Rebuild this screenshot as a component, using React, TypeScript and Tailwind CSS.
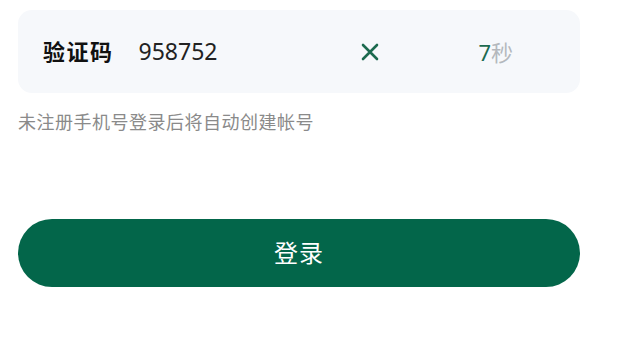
import React, { useState } from 'react';

export default function App() {
    const [code, setCode] = useState('958752');
    const seconds = 7;

    return (
        <div
            className="w-[618px] h-[343px] bg-white overflow-hidden"
            style={{ fontFamily: '"Noto Sans", "Noto Sans CJK SC", sans-serif' }}
        >
            <div className="ml-[18px] w-[562px] pt-[10px]">
                <div className="h-[83px] rounded-[14px] bg-[#f6f8fb] flex items-center pl-[25px] pr-[67px]">
                    <span className="text-[22px] font-bold text-[#111] tracking-[1.5px]">验证码</span>
                    <input
                        value={code}
                        onChange={e => setCode(e.target.value)}
                        className="ml-[25px] flex-1 min-w-0 bg-transparent outline-none text-[23px] text-[#222]"
                    />
                    <button onClick={() => setCode('')} className="w-[20px] h-[20px] flex items-center justify-center">
                        <svg width="18" height="18" viewBox="0 0 18 18" fill="none">
                            <path d="M2 2L16 16M16 2L2 16" stroke="#1c6a4f" strokeWidth="2.6" strokeLinecap="round" />
                        </svg>
                    </button>
                    <span className="ml-[98px] text-[22px] leading-none">
                        <span className="text-[#1c6a4f]">{seconds}</span>
                        <span className="text-[#b4b8bd]">秒</span>
                    </span>
                </div>

                <p className="mt-[17px] text-[18px] leading-[24px] text-[#8a8a8a] tracking-[0.5px]">
                    未注册手机号登录后将自动创建帐号
                </p>

                <button className="mt-[85px] w-full h-[68px] rounded-full bg-[#03664a] text-white text-[24px] tracking-[1px]">
                    登录
                </button>
            </div>
        </div>
    );
}
